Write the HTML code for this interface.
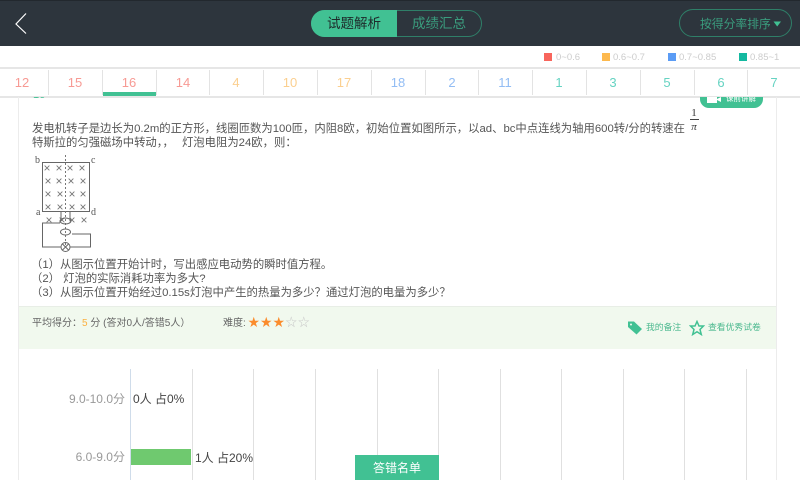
<!DOCTYPE html>
<html lang="zh"><head><meta charset="utf-8">
<style>
html,body{margin:0;padding:0;background:#fff}
#p{position:relative;width:800px;height:480px;overflow:hidden;background:#fff;font-family:"Liberation Sans","Noto Sans CJK SC",sans-serif}
#p div,#p svg{position:absolute}
.t{white-space:nowrap;line-height:16px}
.tab{top:70px;height:26px;width:54px;text-align:center;font-size:13px;line-height:25px}
.dv{top:70px;width:1.4px;height:25px;background:#e3e3e3}
.g{top:369px;width:1.4px;height:111px;background:#e0e0e0}
.q{left:32px;font-size:11.35px;color:#555;white-space:nowrap;line-height:16px}
.lg{top:52px;font-size:9.5px;color:#ccc;line-height:12px;white-space:nowrap}
.sq{top:53px;width:8px;height:8px}
</style></head><body><div id="p">
<div style="left:0;top:0;width:800px;height:46px;background:#2d353d"></div>
<div style="left:0;top:0;width:800px;height:1px;background:#22282e"></div>
<svg style="left:0;top:0" width="40" height="46"><path d="M26 13.500 L16 24 L26 33.500" fill="none" stroke="#fff" stroke-width="1.200"/></svg>
<div style="left:311px;top:10px;width:171px;height:27px;box-sizing:border-box;border:1px solid #2f7f68;border-radius:14px"></div>
<div style="left:311px;top:10px;width:86px;height:27px;background:#41c193;border-radius:14px 0 0 14px"></div>
<div class="t" style="left:327px;top:16px;font-size:13.500px;color:#1e2a2a">试题解析</div>
<div class="t" style="left:412px;top:16px;font-size:13.500px;color:#3a9d7e">成绩汇总</div>
<div style="left:679px;top:9px;width:113px;height:28px;box-sizing:border-box;border:1px solid #2f7f68;border-radius:14px"></div>
<div class="t" style="left:700px;top:16px;font-size:11.800px;color:#3a9d7e">按得分率排序</div>
<svg style="left:773px;top:21px" width="9" height="6"><path d="M0.500 0.500H8L4.200 5.500Z" fill="#41c193"/></svg>

<div class="sq" style="left:544px;background:#f8655c"></div><div class="lg" style="left:556px">0~0.6</div>
<div class="sq" style="left:602px;background:#fdb94e"></div><div class="lg" style="left:613px">0.6~0.7</div>
<div class="sq" style="left:668px;background:#5b9cf5"></div><div class="lg" style="left:679px">0.7~0.85</div>
<div class="sq" style="left:739px;background:#14b9a0"></div><div class="lg" style="left:750px">0.85~1</div>

<div style="left:0;top:67px;width:800px;height:2px;background:#e6e6e6"></div>
<div style="left:0;top:96px;width:800px;height:1.500px;background:#e6e6e6"></div>
<div class="tab" style="left:-5px;color:#f79a94">12</div>
<div class="tab" style="left:48px;color:#f79a94">15</div>
<div class="tab" style="left:102px;color:#f79a94">16</div>
<div class="tab" style="left:156px;color:#f79a94">14</div>
<div class="tab" style="left:209px;color:#fbcf8f">4</div>
<div class="tab" style="left:263px;color:#fbcf8f">10</div>
<div class="tab" style="left:317px;color:#fbcf8f">17</div>
<div class="tab" style="left:371px;color:#93bdf4">18</div>
<div class="tab" style="left:425px;color:#93bdf4">2</div>
<div class="tab" style="left:478px;color:#93bdf4">11</div>
<div class="tab" style="left:532px;color:#66d3c2">1</div>
<div class="tab" style="left:586px;color:#66d3c2">3</div>
<div class="tab" style="left:640px;color:#66d3c2">5</div>
<div class="tab" style="left:694px;color:#66d3c2">6</div>
<div class="tab" style="left:747px;color:#66d3c2">7</div>
<div class="dv" style="left:48px"></div><div class="dv" style="left:102px"></div><div class="dv" style="left:156px"></div><div class="dv" style="left:209px"></div><div class="dv" style="left:263px"></div><div class="dv" style="left:317px"></div><div class="dv" style="left:371px"></div><div class="dv" style="left:425px"></div><div class="dv" style="left:478px"></div><div class="dv" style="left:532px"></div><div class="dv" style="left:586px"></div><div class="dv" style="left:640px"></div><div class="dv" style="left:694px"></div><div class="dv" style="left:747px"></div>
<div style="left:103px;top:92px;width:53px;height:4px;background:#41c193"></div>

<div style="left:18px;top:97px;width:1px;height:383px;background:#ececec"></div>
<div style="left:776px;top:97px;width:1px;height:383px;background:#ececec"></div>

<div style="left:30px;top:97px;width:16px;height:3px;overflow:hidden"><div class="t" style="left:3px;top:-10px;font-size:11px;color:#41c193">16</div></div>
<div style="left:700px;top:97px;width:63px;height:11px;background:#41c193;border-radius:0 0 9px 9px;overflow:hidden">
<svg style="left:6px;top:0" width="16" height="7"><path d="M1 0H11V6H1ZM11 2L15 0V5L11 3Z" fill="#fff"/></svg>
<div class="t" style="left:26px;top:-6px;font-size:7.500px;color:#fff">课前讲解</div></div>

<div class="q" style="top:121px">发电机转子是边长为0.2m的正方形，线圈匝数为100匝，内阻8欧，初始位置如图所示，以ad、bc中点连线为轴用600转/分的转速在</div>
<div class="q" style="top:135px">特斯拉的匀强磁场中转动，， <span style="margin-left:5px">灯泡电阻为24欧，则：</span></div>
<div class="t" style="left:689px;top:107px;width:10px;text-align:center;font-size:11px;line-height:12px;color:#333;font-family:'Liberation Serif',serif">1</div>
<div style="left:690px;top:119px;width:9px;height:1px;background:#444"></div>
<div class="t" style="left:689px;top:121px;width:10px;text-align:center;font-size:11px;line-height:12px;color:#333;font-family:'Liberation Serif',serif;font-style:italic">π</div>

<svg style="left:34px;top:155px" width="64" height="98" font-family="Liberation Serif" font-size="10" fill="#555">
<rect x="8.500" y="7.500" width="47" height="49" fill="none" stroke="#666"/>
<path d="M31.500 0V92" stroke="#777" stroke-dasharray="2 2" fill="none"/>
<g font-family="Liberation Sans" font-size="12" text-anchor="middle" fill="#777">
<text x="13" y="17">×</text><text x="25" y="17">×</text><text x="36" y="17">×</text><text x="48" y="17">×</text>
<text x="14" y="30">×</text><text x="25" y="30">×</text><text x="37" y="30">×</text><text x="49" y="30">×</text>
<text x="14" y="43">×</text><text x="26" y="43">×</text><text x="38" y="43">×</text><text x="49" y="43">×</text>
<text x="14" y="56">×</text><text x="26" y="56">×</text><text x="38" y="56">×</text><text x="49" y="56">×</text>
<text x="15" y="69">×</text><text x="28" y="69">×</text><text x="38" y="69">×</text><text x="50" y="69">×</text>
</g>
<text x="1" y="8">b</text><text x="57" y="8">c</text><text x="2" y="60">a</text><text x="57" y="60">d</text>
<path d="M8.500 56.500H27V66M36 66V56.500H55.500" fill="none" stroke="#666"/>
<ellipse cx="31.500" cy="66" rx="5.500" ry="3" fill="none" stroke="#666"/>
<ellipse cx="31.500" cy="77" rx="5" ry="3" fill="none" stroke="#666"/>
<path d="M26 68H8.500V92H27M36 92H56.500V79H38" fill="none" stroke="#666"/>
<circle cx="31.500" cy="92" r="4.500" fill="none" stroke="#666"/>
<path d="M28.500 89L34.500 95M34.500 89L28.500 95" stroke="#666" fill="none"/>
</svg>

<div class="q" style="left:31px;top:257px">（1）从图示位置开始计时，写出感应电动势的瞬时值方程。</div>
<div class="q" style="left:31px;top:271px">（2） 灯泡的实际消耗功率为多大?</div>
<div class="q" style="left:31px;top:285px">（3）从图示位置开始经过0.15s灯泡中产生的热量为多少？通过灯泡的电量为多少？</div>

<div style="left:19px;top:306px;width:757px;height:43px;background:#f1f9ee;border-top:1px solid #e8eee6;box-sizing:border-box"></div>
<div class="t" style="left:32px;top:316px;font-size:10px;color:#666">平均得分：<span style="color:#fbb040">5</span> 分 (答对0人/答错5人）</div>
<div class="t" style="left:223px;top:316px;font-size:10px;color:#666">难度:</div>
<div class="t" style="left:248px;top:315px;font-size:11.500px;letter-spacing:1px;color:#fb8c2c">★★★<span style="color:#c8c8c8">☆☆</span></div>
<svg style="left:627px;top:320px" width="16" height="15"><path d="M1 1.500H7L15 9L9.500 14.500L1 7Z" fill="#41c193"/><circle cx="4" cy="4.500" r="1" fill="#f1f9ee"/></svg>
<div class="t" style="left:646px;top:319px;font-size:8.800px;color:#4cb98f">我的备注</div>
<svg style="left:689px;top:320px" width="16" height="16"><path d="M8 1.500L10 6H14.500L11 9.500L12.300 14.500L8 11.800L3.700 14.500L5 9.500L1.500 6H6Z" fill="none" stroke="#41c193" stroke-width="1.500"/></svg>
<div class="t" style="left:708px;top:319px;font-size:8.800px;color:#4cb98f">查看优秀试卷</div>

<div style="left:130px;top:369px;width:1px;height:111px;background:#cfdcea"></div>
<div class="g" style="left:191.500px"></div><div class="g" style="left:253px"></div><div class="g" style="left:315px"></div><div class="g" style="left:376.500px"></div><div class="g" style="left:438px"></div><div class="g" style="left:499.500px"></div><div class="g" style="left:561px"></div><div class="g" style="left:623px"></div><div class="g" style="left:684px"></div><div class="g" style="left:746px"></div>
<div class="t" style="left:40px;top:391px;width:85px;text-align:right;font-size:12px;color:#999">9.0-10.0分</div>
<div class="t" style="left:133px;top:391px;font-size:12px;color:#444">0人 占0%</div>
<div class="t" style="left:40px;top:449px;width:85px;text-align:right;font-size:12px;color:#999">6.0-9.0分</div>
<div style="left:131px;top:449px;width:60px;height:16px;background:#6fc96f"></div>
<div class="t" style="left:195px;top:450px;font-size:12px;color:#444">1人 占20%</div>
<div style="left:355px;top:455px;width:84px;height:25px;background:#41c193;color:#fff;font-size:12px;line-height:26px;text-align:center">答错名单</div>
</div></body></html>
